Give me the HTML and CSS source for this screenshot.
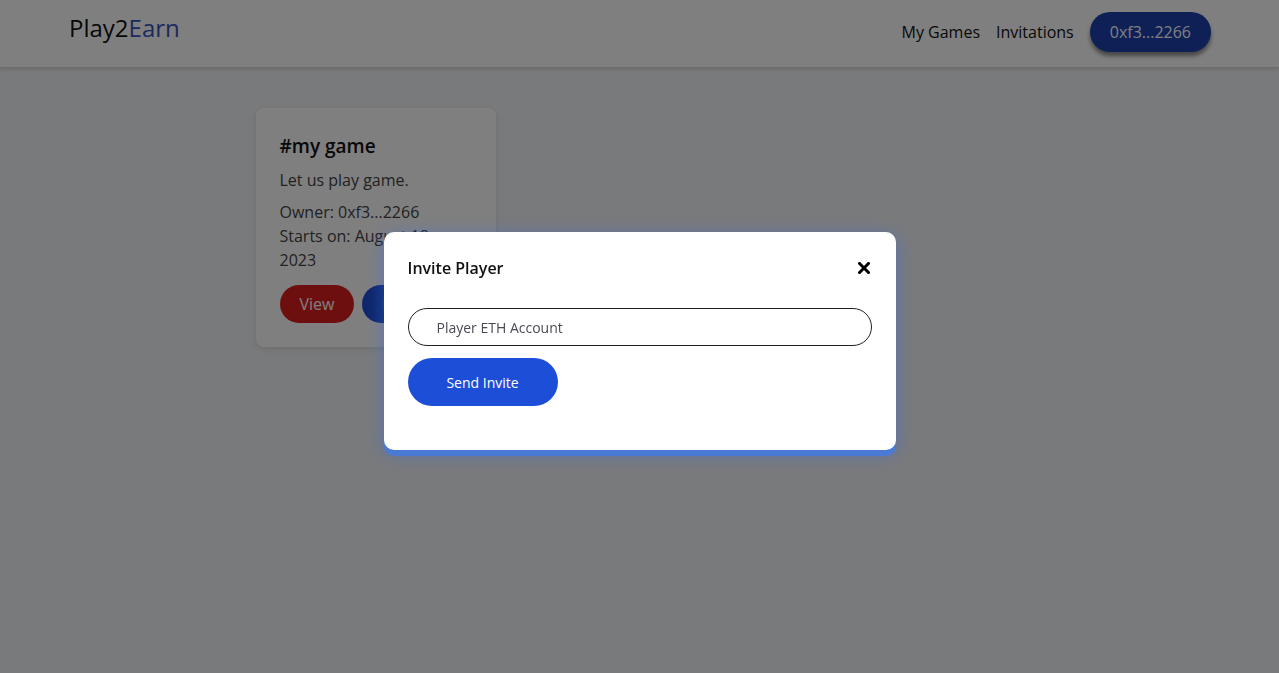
FILE: index.html
```html
<!DOCTYPE html>
<html lang="en">
<head>
    <meta charset="UTF-8">
    <meta name="viewport" content="width=device-width, initial-scale=1.0">
    <title>Play2Earn</title>
    <link rel="stylesheet" href="styles.css">
</head>
<body>
    <header class="topbar">
        <a class="logo" href="#">Play2<span>Earn</span></a>
        <nav class="nav">
            <a href="#">My Games</a>
            <a href="#">Invitations</a>
            <button class="account-btn">0xf3...2266</button>
        </nav>
    </header>

    <main class="games">
        <div class="game-card">
            <h3>#my game</h3>
            <p class="desc">Let us play game.</p>
            <p class="meta">Owner: 0xf3...2266<br>Starts on: August 18, 2023</p>
            <div class="card-actions">
                <button class="btn btn-red">View</button>
                <button class="btn btn-blue">Invite</button>
            </div>
        </div>
    </main>

    <div class="overlay">
        <div class="modal">
            <div class="modal-head">
                <h4>Invite Player</h4>
                <button class="close-btn" aria-label="Close">
                    <svg width="12" height="12" viewBox="0 0 12 12">
                        <path d="M1.5 1.5 L10.5 10.5 M10.5 1.5 L1.5 10.5" stroke="#000" stroke-width="3" stroke-linecap="square"/>
                    </svg>
                </button>
            </div>
            <input class="eth-input" type="text" placeholder="Player ETH Account">
            <button class="send-btn">Send Invite</button>
        </div>
    </div>
</body>
</html>
```

FILE: styles.css
```css
* {
    box-sizing: border-box;
}

body {
    margin: 0;
    font-family: "Open Sans", "Noto Sans", sans-serif;
    background: #f3f4f6;
    color: #111;
    min-height: 100vh;
}

.topbar {
    height: 68px;
    background: #fff;
    display: flex;
    justify-content: space-between;
    align-items: flex-start;
    padding: 0 68px 0 69px;
    border-bottom: 1px solid #ddd;
    box-shadow: 0 1px 4px rgba(0,0,0,0.15);
}

.logo {
    font-size: 24px;
    line-height: 32px;
    padding-top: 12px;
    color: #111;
    text-decoration: none;
}

.logo span {
    color: #3a55c0;
}

.nav {
    display: flex;
    align-items: center;
    gap: 16px;
    padding-top: 12px;
}

.nav a {
    color: #111;
    text-decoration: none;
    font-size: 16px;
    line-height: 38px;
}

.account-btn {
    font-family: inherit;
    font-size: 16px;
    color: #fff;
    background: #1e40af;
    border: none;
    border-radius: 20px;
    height: 40px;
    padding: 0 20px;
    box-shadow: 0 4px 4px rgba(0,0,0,0.45);
}

.games {
    max-width: 768px;
    margin: 40px auto 0;
    display: grid;
    grid-template-columns: repeat(3, 240px);
    gap: 24px;
}

.game-card {
    background: #fff;
    border-radius: 8px;
    padding: 24px;
    box-shadow: 0 2px 6px rgba(0,0,0,0.1);
}

.game-card h3 {
    margin: 0 0 8px;
    font-size: 19px;
    font-weight: 600;
    line-height: 28px;
    color: #111;
}

.game-card p {
    margin: 0 0 8px;
    font-size: 16px;
    line-height: 24px;
    color: #444;
}

.card-actions {
    display: flex;
    gap: 8px;
    margin-top: 13px;
}

.btn {
    font-family: inherit;
    font-size: 16px;
    color: #fff;
    border: none;
    border-radius: 19px;
    height: 38px;
    padding: 0 20px;
}

.btn-red {
    background: #dc1f1f;
}

.btn-blue {
    background: #1d4ed8;
}

.overlay {
    position: fixed;
    inset: 0;
    background: rgba(0,0,0,0.5);
    display: flex;
    justify-content: center;
    align-items: center;
}

.modal {
    width: 512px;
    margin-top: 9px;
    background: #fff;
    border-radius: 10px;
    padding: 24px 24px 44px;
    box-shadow: 0 6px 0 #4a7ad6, 0 4px 18px rgba(59,110,230,0.55);
}

.modal-head {
    display: flex;
    justify-content: space-between;
    align-items: center;
    height: 24px;
    margin-bottom: 28px;
}

.modal-head h4 {
    margin: 0;
    font-size: 16px;
    font-weight: 600;
    color: #111;
}

.close-btn {
    background: none;
    border: none;
    padding: 0;
    margin-right: 2px;
    display: flex;
    cursor: pointer;
}

.eth-input {
    display: block;
    width: 100%;
    height: 38px;
    border: 1px solid #222;
    border-radius: 19px;
    padding: 0 28px;
    font-family: inherit;
    font-size: 14px;
    margin-bottom: 12px;
}

.eth-input::placeholder {
    color: #4a4a55;
}

.send-btn {
    font-family: inherit;
    font-size: 14px;
    color: #fff;
    background: #1d4ed8;
    border: none;
    border-radius: 24px;
    width: 150px;
    height: 48px;
}
```
